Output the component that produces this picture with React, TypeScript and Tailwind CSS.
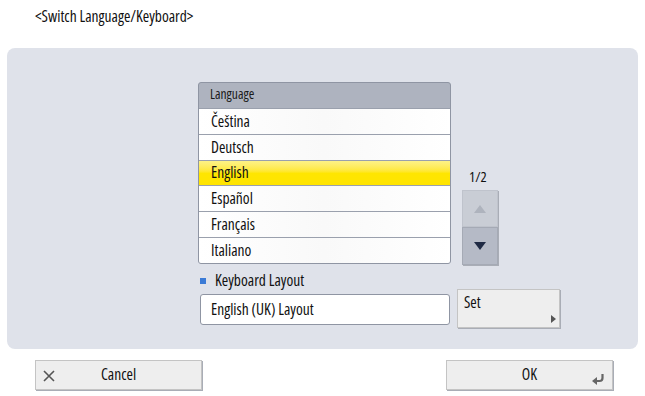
import React from "react";

const langs = ["Čeština", "Deutsch", "English", "Español", "Français", "Italiano"];

export default function App() {
  return (
    <div className="w-[645px] h-[396px] bg-white relative overflow-hidden text-[#111] font-['Open_Sans',Roboto,sans-serif] font-stretch-[75%]">
      <div className="h-[48px] pl-[35px] pt-[6px] text-[15.5px] leading-[20px]">&lt;Switch Language/Keyboard&gt;</div>
      <div className="mx-[7px] h-[301px] rounded-[8px] bg-[#dfe2ea] flex flex-col pt-[34px]">
        <div className="flex pl-[191px]">
          <div className="w-[253px] h-[182px] rounded-[3px] border border-[#8f95a3] bg-[#aeb3bf] flex flex-col overflow-hidden">
            <div className="h-[25px] pl-[11px] pt-[3px] text-[13.5px] leading-[17px] text-[#1a1a1a]">Language</div>
            {langs.map((l, i) => (
              <div
                key={l}
                className={
                  "h-[26px] pl-[12px] flex items-center text-[15.5px] border-t border-[#9aa0ad] " +
                  (i === 2
                    ? "bg-gradient-to-b from-[#fdf286] via-[#ffe600] to-[#ffe400]"
                    : "bg-gradient-to-r from-white via-[#f9f9f9] to-white")
                }
              >
                {l}
              </div>
            ))}
          </div>
          <div className="ml-[10px] w-[36px] relative">
            <div className="absolute top-[86px] left-[8px] text-[14.5px] leading-[17px]">1/2</div>
          </div>
        </div>
        <div className="flex flex-col pl-[193px] pt-[9px]">
          <div className="flex items-center h-[16px]">
            <div className="w-[6px] h-[6px] bg-[#3b7bd6]" />
            <span className="ml-[9px] text-[15.5px]">Keyboard Layout</span>
          </div>
          <div className="flex">
            <div className="mt-[5px] w-[250px] h-[31px] rounded-[3px] border border-[#8f95a3] bg-white pl-[10px] flex items-center text-[15.5px]">
              English (UK) Layout
            </div>
            <div className="ml-[7px] w-[103px] h-[39px] bg-[#eeeeee] border border-[#c4c4c4] shadow-[1px_1px_0_#a9adb6] relative pl-[6px] pt-[1px] text-[15.5px]">
              Set
              <div className="absolute right-[3px] bottom-[4px] w-0 h-0 border-y-[4px] border-y-transparent border-l-[5px] border-l-[#555]" />
            </div>
          </div>
        </div>
      </div>
      {/* scroll buttons over the panel */}
      <div className="absolute left-[462px] top-[190px] w-[36px] h-[75px] flex flex-col shadow-[1px_1px_0_#a9adb6]">
        <div className="h-[37px] bg-[#c9cdd5] border border-[#bfc3cc] flex items-center justify-center">
          <div className="w-0 h-0 border-x-[6px] border-x-transparent border-b-[8px] border-b-[#aeb3bd]" />
        </div>
        <div className="h-[38px] bg-[#b5bac6] border border-[#a5aab5] flex items-center justify-center">
          <div className="w-0 h-0 border-x-[6px] border-x-transparent border-t-[8px] border-t-[#1f2a44]" />
        </div>
      </div>
      <div className="flex justify-between pl-[35px] pr-[32px] pt-[11px]">
        <div className="w-[167px] h-[30px] bg-[#eeeeee] border border-[#c4c4c4] shadow-[1px_1px_0_#a9adb6] flex items-center relative text-[15.5px]">
          <svg className="absolute left-[7px] top-[9px]" width="12" height="12" viewBox="0 0 12 12">
            <path d="M1 1 L11 11 M11 1 L1 11" stroke="#555" strokeWidth="1.6" fill="none" />
          </svg>
          <span className="w-full text-center">Cancel</span>
        </div>
        <div className="w-[167px] h-[30px] bg-[#eeeeee] border border-[#c4c4c4] shadow-[1px_1px_0_#a9adb6] flex items-center relative text-[15.5px]">
          <span className="w-full text-center">OK</span>
          <svg className="absolute right-[7px] bottom-[4px]" width="14" height="11" viewBox="0 0 14 11">
            <path d="M11.5 0 V4 Q11.5 7 8.5 7 H5" stroke="#666" strokeWidth="2.2" fill="none" />
            <path d="M1 7 L6 3 V11 Z" fill="#666" />
          </svg>
        </div>
      </div>
    </div>
  );
}
